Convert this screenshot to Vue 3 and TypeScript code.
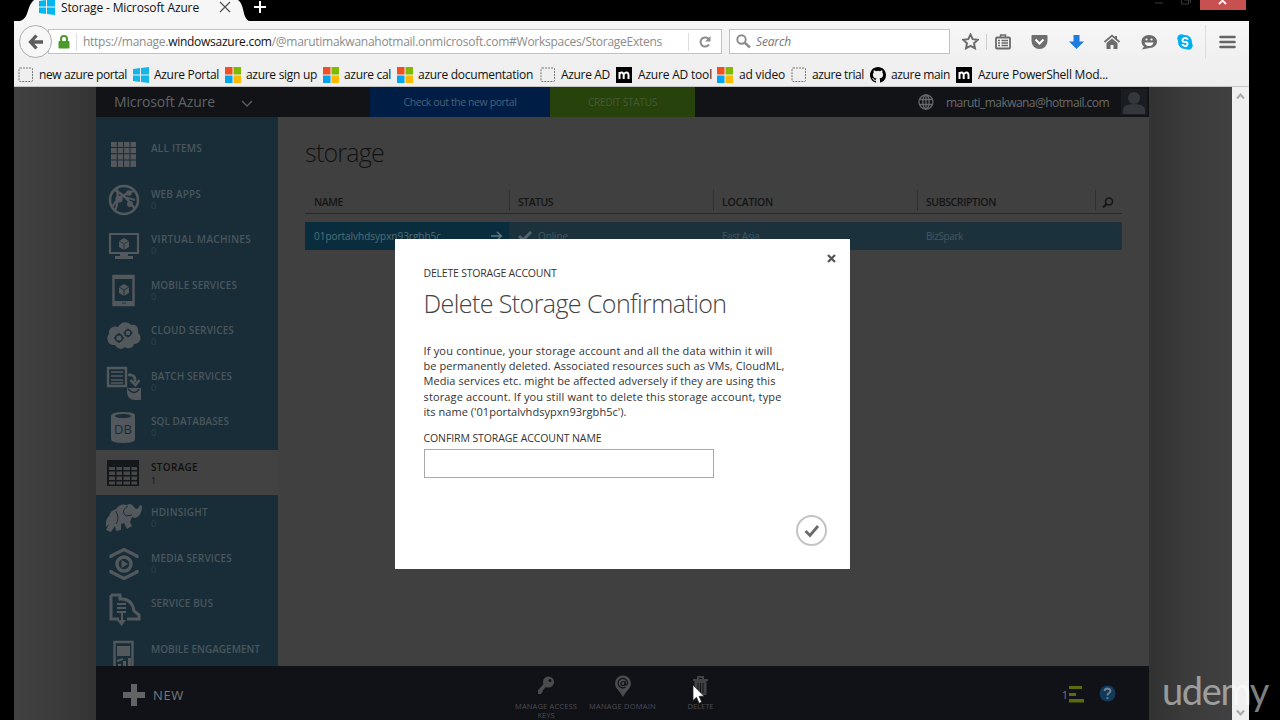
<script setup lang="ts">
import type { Directive } from 'vue'

interface Bookmark { label: string; kind: string; x: number; gap: number; w: number }
interface Service { label: string; count: string; icon: string; w: number; active?: boolean }

// Adjusts tracking so that a label occupies its designed measure.
const vFit: Directive<HTMLElement, number> = {
  mounted(el, { value }) {
    const n = (el.textContent ?? '').length
    const natural = el.getBoundingClientRect().width
    if (n > 1) el.style.letterSpacing = `${(value - natural) / n}px`
  },
}

const bookmarks: Bookmark[] = [
  { label: 'new azure portal', kind: 'blank', x: 115, gap: 5, w: 88 },
  { label: 'Azure Portal', kind: 'win', x: 92, gap: 5, w: 65 },
  { label: 'azure sign up', kind: 'ms', x: 98, gap: 5, w: 71 },
  { label: 'azure cal', kind: 'ms', x: 74, gap: 5, w: 47 },
  { label: 'azure documentation', kind: 'ms', x: 143, gap: 5, w: 115 },
  { label: 'Azure AD', kind: 'blank', x: 76, gap: 5, w: 49 },
  { label: 'Azure AD tool', kind: 'm', x: 101, gap: 6, w: 74 },
  { label: 'ad video', kind: 'ms', x: 74, gap: 6, w: 46 },
  { label: 'azure trial', kind: 'blank', x: 79, gap: 5, w: 52 },
  { label: 'azure main', kind: 'git', x: 86, gap: 5, w: 59 },
  { label: 'Azure PowerShell Mod...', kind: 'm', x: 160, gap: 6, w: 130 },
]

const gear = '<circle cx="0" cy="0" r="3.4" fill="none" stroke="#192c37" stroke-width="1.6"/><path d="M0-5v2M0 3v2M-5 0h2M3 0h2" stroke="#192c37" stroke-width="1.4"/>'

const icons: Record<string, string> = {
  all: '<path d="M5 6h25v25H5z" fill="currentColor"/><path d="M5 11.5h25M5 17.7h25M5 24h25M11.3 6v25M17.6 6v25M24 6v25" stroke="#192c37" stroke-width="1"/>',
  web: '<circle cx="18" cy="18" r="14" fill="none" stroke="currentColor" stroke-width="2.6"/><path d="M9 8Q20 14 29 27M6 25Q13 13 28 9M9 29Q13 20 11 6M18 15l11 3" fill="none" stroke="currentColor" stroke-width="2.2"/><circle cx="13" cy="17" r="3.6" fill="currentColor"/><circle cx="23" cy="11" r="2.8" fill="currentColor"/><circle cx="24" cy="22" r="3" fill="currentColor"/>',
  vm: '<path d="M4 7h28v19H4z" fill="none" stroke="currentColor" stroke-width="2.2"/><path d="M14 26h8v3h5v3H9v-3h5z" fill="currentColor"/><path d="M18 11l5 3v6l-5 3-5-3v-6z" fill="currentColor"/><path d="M13 14l5 3 5-3M18 17v6" fill="none" stroke="#192c37" stroke-width=".7"/>',
  mobile: '<path d="M7.5 3h20v29h-20z" fill="none" stroke="currentColor" stroke-width="2.4"/><path d="M7 2h21v4H7zM7 28h21v5H7z" fill="currentColor"/><path d="M18 11l5 3v6l-5 3-5-3v-6z" fill="currentColor"/><path d="M13 14l5 3 5-3M18 17v6M16 30h4" fill="none" stroke="#192c37" stroke-width=".9"/>',
  cloud: '<path d="M9 27C3 28-1 21 3 16c-1-6 5-9 9-7 3-6 10-6 13-2 6-1 8 3 7 8 5 4 2 11-4 11-1 5-7 5-9 3-3 3-8 2-10-2z" fill="currentColor"/><g transform="translate(13 20)">' + gear + '</g><g transform="translate(22 15) scale(.9)">' + gear + '</g>',
  batch: '<path d="M2 4h18v18H2z" fill="none" stroke="currentColor" stroke-width="2.4"/><path d="M5 8h12M5 12h12M5 16h12M5 19h12" stroke="currentColor" stroke-width="1.7"/><path d="M22 11q8-1 7 7M24.500 16l5 5 4-5" fill="none" stroke="currentColor" stroke-width="2.6"/><path d="M21 24h14v12h-6q-7 0-8-7z" fill="currentColor"/><path d="M22 25q7 7 11 0" fill="none" stroke="#192c37" stroke-width="1.3"/>',
  sql: '<path d="M5 7q0-4 12.500-4T29 7v23q0 4-12 4T5 30z" fill="currentColor"/><ellipse cx="17" cy="7" rx="8" ry="2" fill="#192c37"/><text x="17" y="25" text-anchor="middle" font-family="Open Sans, sans-serif" font-size="13" font-weight="400" fill="#192c37">DB</text>',
  storage: '<path d="M1 5h32v26H1z" fill="#14171b"/><path d="M3 12h6v3H3zm7.500 0H16v3h-5.500zm7 0H24v3h-6.500zm8 0H31v3h-5.500zM3 16.500h6v3.500H3zm7.500 0H16V20h-5.500zm7 0H24V20h-6.500zm8 0H31V20h-5.500zM3 21.500h6V25H3zm7.500 0H16V25h-5.500zm7 0H24V25h-6.500zm8 0H31V25h-5.500zM3 26.500h6v3H3zm7.500 0H16v3h-5.500zm7 0H24v3h-6.500zm8 0H31v3h-5.500z" fill="#484848"/>',
  elephant: '<path d="M10 9q4-6 11-4 4-3 7 2 3 5 6-2l2 1q0 10-7 12l-3-1-2 5 2 4-5 3-3-6-3 1v6l-5 1-1-5-4 6-5-2 3-6-3 3q-1-8 3-11 1-5 7-7z" fill="currentColor"/><path d="M10 11q4 8 0 13M22 6q-8 5-2 10l6-1" fill="none" stroke="#192c37" stroke-width="1"/>',
  media: '<path d="M5 12V10L18 3.500 31 10v2M5 24v2l13 6.500L31 26v-2" fill="none" stroke="currentColor" stroke-width="3.200"/><circle cx="18" cy="18" r="7" fill="none" stroke="currentColor" stroke-width="3.400"/><path d="M15.500 14v8l6.500-4z" fill="currentColor"/>',
  bus: '<path d="M5 4h9v4q12-1 14 12l5 4v4H21M13 28H5V4" fill="none" stroke="currentColor" stroke-width="3"/><path d="M11 13h9M11 17h9M11 21h9M16 21v9" stroke="currentColor" stroke-width="2"/><path d="M11 29h9l-4.500 6z" fill="currentColor"/>',
  engage: '<path d="M8.500 5h18v32h-18z" fill="none" stroke="currentColor" stroke-width="2.400"/><path d="M11 9h13v10H11zM12 27h3v6h-3zM17 24h3v9h-3zM22 21h3v12h-3z" fill="currentColor"/><path d="M11 24l6-2" stroke="currentColor" stroke-width="2"/>',
}

const services: Service[] = [
  { label: 'ALL ITEMS', count: '', icon: 'all', w: 51 },
  { label: 'WEB APPS', count: '0', icon: 'web', w: 50 },
  { label: 'VIRTUAL MACHINES', count: '0', icon: 'vm', w: 100 },
  { label: 'MOBILE SERVICES', count: '0', icon: 'mobile', w: 86 },
  { label: 'CLOUD SERVICES', count: '0', icon: 'cloud', w: 83 },
  { label: 'BATCH SERVICES', count: '0', icon: 'batch', w: 81 },
  { label: 'SQL DATABASES', count: '0', icon: 'sql', w: 78 },
  { label: 'STORAGE', count: '1', icon: 'storage', w: 47, active: true },
  { label: 'HDINSIGHT', count: '0', icon: 'elephant', w: 57 },
  { label: 'MEDIA SERVICES', count: '0', icon: 'media', w: 81 },
  { label: 'SERVICE BUS', count: '', icon: 'bus', w: 62 },
  { label: 'MOBILE ENGAGEMENT', count: '', icon: 'engage', w: 109 },
]

const warning = [
  { text: 'If you continue, your storage account and all the data within it will', w: 349 },
  { text: 'be permanently deleted. Associated resources such as VMs, CloudML,', w: 361 },
  { text: 'Media services etc. might be affected adversely if they are using this', w: 352 },
  { text: 'storage account. If you still want to delete this storage account, type', w: 358 },
  { text: "its name ('01portalvhdsypxn93rgbh5c').", w: 203 },
]
</script>

<template>
  <div class="screen">
    <div class="browser">
      <div class="tabstrip">
        <svg class="tabshape" width="236" height="22" viewBox="0 0 236 22"><path d="M0 22C15 20 9 8 18 0H222C230 6 225 20 236 22z" fill="#f6f6f6" /></svg>
        <svg class="tabicon" width="16" height="16" viewBox="0 0 16 16" fill="#00b7f0"><path d="M0 2l7-1v6.500H0zM8 1l8-1v7.500H8zM0 8.500h7V15l-7-1zM8 8.500h8V16l-8-1z" /></svg>
        <span class="tabtitle"><span v-fit="138" class="t">Storage - Microsoft Azure</span></span>
        <svg class="tabclose" width="12" height="12" viewBox="0 0 12 12" stroke="#555" stroke-width="1.300"><path d="M1 1l10 10M11 1L1 11" /></svg>
        <svg class="tabadd" width="14" height="14" viewBox="0 0 14 14" stroke="#fff" stroke-width="2"><path d="M7 1v12M1 7h12" /></svg>
        <div class="winctl">
          <svg width="42" height="10" viewBox="0 0 42 10" fill="none" stroke="#393939"><path d="M1 3h8M27.500 0v4h7V0M30 0h6.500v3" /></svg>
          <span class="winclose"><svg width="10" height="8" viewBox="0 0 10 8" stroke="#fff" stroke-width="1.800"><path d="M1-3l7 7M8-3L1 4" /></svg></span>
        </div>
      </div>

      <div class="toolbar">
        <div class="nav">
          <div class="back"><svg width="16" height="16" viewBox="0 0 16 16" fill="none" stroke="#5c5c5c" stroke-width="3.300"><path d="M15 8H3M8.500 1.500L2.500 8l6 6.500" /></svg></div>
          <div class="urlbar">
            <svg class="lock" width="12" height="14" viewBox="0 0 12 14"><path d="M3 7V4a3 3 0 016 0v3" fill="none" stroke="#4c9a2a" stroke-width="2" /><rect x=".5" y="6" width="11" height="7.500" rx="1" fill="#4c9a2a" /></svg>
            <span class="url"><span v-fit="579" class="t">https://manage.<b>windowsazure.com</b>/@marutimakwanahotmail.onmicrosoft.com#Workspaces/StorageExtens</span></span>
            <span class="reload"><svg width="14" height="14" viewBox="0 0 14 14"><path d="M11 9.500A4.600 4.600 0 1111 4.500" fill="none" stroke="#8b8b8b" stroke-width="2" /><path d="M12.500 1v5.500H7z" fill="#8b8b8b" /></svg></span>
          </div>
          <div class="search">
            <svg width="15" height="15" viewBox="0 0 15 15" fill="none" stroke="#8a8a8a"><circle cx="5.500" cy="5.500" r="4.200" stroke-width="1.900" /><path d="M8.500 8.500l5.500 5" stroke-width="2.400" /></svg>
            <i v-fit="35" class="t">Search</i>
          </div>
          <div class="tools">
            <svg width="17" height="17" viewBox="0 0 17 17"><path d="M8.500 1.500l2.200 4.700 5 .6-3.700 3.500 1 5-4.500-2.500L4 15.300l1-5L1.300 6.800l5-.6z" fill="none" stroke="#6a6a6a" stroke-width="1.900" /></svg>
            <span class="rule"></span>
            <div class="actions">
              <svg width="16" height="16" viewBox="0 0 16 16" fill="none" stroke="#6a6a6a" stroke-width="1.800"><rect x="1" y="3.500" width="14" height="11" rx="1" /><path d="M5.500 3V1h5v2M3 6.500h2M6.500 6.500H13M3 9h2M6.500 9H13M3 11.500h2M6.500 11.500H13" stroke-width="1.400" /></svg>
              <svg width="17" height="16" viewBox="0 0 17 16"><path d="M1.500 1h14q1 0 1 1v5a8 8 0 01-16 0V2q0-1 1-1z" fill="#6e6e6e" /><path d="M4.500 5.500l4 4 4-4" fill="none" stroke="#fff" stroke-width="2" /></svg>
              <svg width="15" height="16" viewBox="0 0 15 16"><path d="M4.500 1h6v6.500H15L7.500 15 0 7.500h4.500z" fill="#1c7ce0" /></svg>
              <svg width="16" height="16" viewBox="0 0 16 16"><path d="M.5 8L8 1.500 15.500 8" fill="none" stroke="#6b6b6b" stroke-width="1.700" /><path d="M2.500 9L8 4.500 13.500 9v6h-4v-4h-3v4h-4zM11 2h2v3h-2z" fill="#6b6b6b" /></svg>
              <svg width="16" height="16" viewBox="0 0 16 16"><path d="M8 1c5 0 8 3 8 6.500S13 14 8.500 14L1 15.500l2-3C-2 8 1 1 8 1z" fill="#6b6b6b" /><circle cx="5.500" cy="5.500" r="1.100" fill="#fff" /><circle cx="10.500" cy="5.500" r="1.100" fill="#fff" /><path d="M3.500 8.500h9q-1 3.500-4.500 3.500T3.500 8.500z" fill="#fff" /></svg>
              <svg width="16" height="16" viewBox="0 0 16 16" fill="#00aff0"><circle cx="8" cy="8" r="7" /><circle cx="4.500" cy="4.500" r="4.200" /><circle cx="11.500" cy="11.500" r="4.200" /><path d="M11 5.500Q10 4 8 4T5.500 6 8 8t2.500 2.200T8 12t-3-1.700" fill="none" stroke="#fff" stroke-width="1.800" /></svg>
            </div>
            <span class="rule tall"></span>
            <svg class="menu" width="17" height="14" viewBox="0 0 17 14" stroke="#666" stroke-width="2.600"><path d="M1.500 2h14M1.500 7h14M1.500 12h14" stroke-linecap="round" /></svg>
          </div>
        </div>
        <div class="bookmarks">
          <div v-for="b in bookmarks" :key="b.label" class="bm" :style="{ width: b.x + 'px', gap: b.gap + 'px' }">
            <svg v-if="b.kind === 'blank'" width="16" height="16" viewBox="0 0 16 16"><rect x="1" y="1" width="13.500" height="13.500" rx="1" fill="none" stroke="#777" stroke-dasharray="2 1" /></svg>
            <svg v-else-if="b.kind === 'win'" width="16" height="16" viewBox="0 0 16 16" fill="#16b5e8"><path d="M0 2l7-1v6.500H0zM8 1l8-1v7.500H8zM0 8.500h7V15l-7-1zM8 8.500h8V16l-8-1z" /></svg>
            <svg v-else-if="b.kind === 'ms'" width="16" height="16" viewBox="0 0 16 16"><path d="M0 0h7.500v7.500H0z" fill="#f25022" /><path d="M8.500 0H16v7.500H8.500z" fill="#7fba00" /><path d="M0 8.500h7.500V16H0z" fill="#00a4ef" /><path d="M8.500 8.500H16V16H8.500z" fill="#ffb900" /></svg>
            <svg v-else-if="b.kind === 'm'" width="16" height="16" viewBox="0 0 16 16"><path d="M0 0h16v16H0z" /><path d="M3.500 12V5M3.500 7q1-2 2.500-1.500T7.700 8v4M8 7q1.500-2 3-1.500T12.500 8v4" fill="none" stroke="#fff" stroke-width="2" /></svg>
            <svg v-else width="16" height="16" viewBox="0 0 16 16"><path d="M8 0C3.580 0 0 3.580 0 8c0 3.540 2.290 6.530 5.470 7.590.4.070.55-.17.55-.38 0-.19-.01-.82-.01-1.490-2.010.37-2.530-.49-2.690-.94-.09-.23-.48-.94-.82-1.130-.28-.15-.68-.52-.01-.53.63-.01 1.080.58 1.230.82.72 1.210 1.870.87 2.330.66.07-.52.28-.87.51-1.070-1.780-.2-3.640-.89-3.640-3.950 0-.87.31-1.590.82-2.150-.08-.2-.36-1.020.08-2.120 0 0 .67-.21 2.200.82a7.600 7.600 0 014 0c1.530-1.040 2.200-.82 2.200-.82.44 1.100.16 1.920.08 2.120.51.56.82 1.270.82 2.150 0 3.070-1.870 3.750-3.650 3.950.29.25.54.73.54 1.480 0 1.070-.01 1.930-.01 2.200 0 .21.15.46.55.38A8 8 0 0016 8c0-4.420-3.580-8-8-8z" /></svg>
            <span v-fit="b.w" class="t">{{ b.label }}</span>
          </div>
        </div>
      </div>

      <div class="viewport">
        <div class="gutter left"></div>
        <div class="portal">
          <header class="top">
            <div class="brand"><span v-fit="101" class="t">Microsoft Azure</span><svg width="12" height="8" viewBox="0 0 12 8" fill="none" stroke="#5c5f62" stroke-width="1.300"><path d="M1 1l5 5 5-5" /></svg></div>
            <div class="promo"><span v-fit="113" class="t">Check out the new portal</span></div>
            <div class="credit"><span v-fit="69" class="t">CREDIT STATUS</span></div>
            <div class="user">
              <svg width="16" height="16" viewBox="0 0 16 16" fill="none" stroke="#65686a" stroke-width="1.300"><circle cx="8" cy="8" r="7" /><ellipse cx="8" cy="8" rx="3.200" ry="7" /><path d="M8 1v14M1.500 5.500h13M1.500 10.500h13" /></svg>
              <span v-fit="163" class="t">maruti_makwana@hotmail.com</span>
              <svg class="avatar" width="26" height="26" viewBox="0 0 26 26"><path d="M0 0h26v26H0z" fill="#191d22" /><circle cx="13" cy="9" r="6" fill="#34373b" /><path d="M2 25v-4q0-6 11-6t11 6v4z" fill="#34373b" /></svg>
            </div>
          </header>
          <div class="body">
            <nav class="side">
              <div v-for="s in services" :key="s.label" class="item" :class="{ active: s.active }">
                <svg width="36" height="38" viewBox="0 0 36 38"><g v-html="icons[s.icon]"></g></svg>
                <div class="txt"><span v-fit="s.w" class="t">{{ s.label }}</span><small>{{ s.count }}</small></div>
              </div>
            </nav>
            <main class="main">
              <h1><span v-fit="79" class="t">storage</span></h1>
              <div class="thead">
                <div><span v-fit="29" class="t">NAME</span></div>
                <div><span v-fit="35" class="t">STATUS</span></div>
                <div><span v-fit="51" class="t">LOCATION</span></div>
                <div><span v-fit="70" class="t">SUBSCRIPTION</span></div>
                <div class="find"><svg width="12" height="12" viewBox="0 0 12 12" fill="none" stroke="#151515" stroke-width="1.600"><circle cx="7" cy="4.500" r="3.500" /><path d="M4.500 7L1 10.500" stroke-width="2" /></svg></div>
              </div>
              <div class="row">
                <div class="name"><span v-fit="127" class="t">01portalvhdsypxn93rgbh5c</span><svg width="12" height="10" viewBox="0 0 12 10" fill="none" stroke="#657780" stroke-width="1.400"><path d="M0 5h10M6 1l4.500 4L6 9" /></svg></div>
                <div class="status"><svg width="14" height="11" viewBox="0 0 14 11" fill="none" stroke="#55646b" stroke-width="3"><path d="M1 5l4 4 8-8" /></svg><span v-fit="30" class="t">Online</span></div>
                <div><span v-fit="37" class="t">East Asia</span></div>
                <div><span v-fit="37" class="t">BizSpark</span></div>
              </div>
            </main>
          </div>
          <footer class="bar">
            <div class="new"><svg width="24" height="24" viewBox="0 0 24 24" fill="#626365"><path d="M9 1h6v8h8v6h-8v8H9v-8H1V9h8z" /></svg><span v-fit="31" class="t">NEW</span></div>
            <div class="cmd keys">
              <svg width="22" height="22" viewBox="0 0 22 22"><circle cx="13.500" cy="7" r="5.500" fill="#4b4c4e" /><path d="M11 9l-7 8" fill="none" stroke="#4b4c4e" stroke-width="3.500" /><path d="M3 15v4h3l2-3z" fill="#4b4c4e" /><circle cx="15" cy="5.500" r="1.500" fill="#111317" /></svg>
              <span v-fit="62" class="t">MANAGE ACCESS</span><span v-fit="17" class="t">KEYS</span>
            </div>
            <div class="cmd domain">
              <svg width="22" height="22" viewBox="0 0 22 22"><path d="M11 22C8 16 3 13 3 8.500a8 8 0 0116 0C19 13 14 16 11 22z" fill="#4b4c4e" /><g fill="none" stroke="#111317" stroke-width="1.200"><circle cx="11" cy="8.500" r="2" /><path d="M13 6v3.500q2.500 1.500 2.500-1.500a4.700 4.700 0 10-2 4" /></g></svg>
              <span v-fit="67" class="t">MANAGE DOMAIN</span>
            </div>
            <div class="cmd trash">
              <svg width="22" height="22" viewBox="0 0 22 22"><path d="M3 5h15M8 4V2h5v2" fill="none" stroke="#414244" stroke-width="2" /><path d="M4.500 6h12v14h-12z" fill="#414244" /><path d="M8 8v10M10.500 8v10M13 8v10" stroke="#111317" stroke-width="1" /></svg>
              <span v-fit="26" class="t">DELETE</span>
            </div>
            <div class="tail">
              <span class="one">1</span>
              <svg width="17" height="17" viewBox="0 0 17 17" fill="#5a6b10"><path d="M1 0h13v3H1zM1 7h7v3H1zM1 13h15v3.500H1z" /></svg>
              <svg class="help" width="17" height="17" viewBox="0 0 17 17"><circle cx="8.500" cy="8.500" r="8" fill="#123a5a" /><path d="M5.500 6q.5-2.500 3-2.500t3 2.300q0 1.500-1.700 2.300-1.300.7-1.300 2.300M8.500 12.200V14" fill="none" stroke="#758490" stroke-width="1.800" /></svg>
            </div>
          </footer>
        </div>
        <div class="gutter right"></div>
        <div class="scroll">
          <svg width="9" height="7" viewBox="0 0 9 7" fill="none" stroke="#aaa" stroke-width="2"><path d="M1 5.500l3.500-4 3.500 4" /></svg>
          <svg width="9" height="7" viewBox="0 0 9 7" fill="none" stroke="#aaa" stroke-width="2"><path d="M1 1.500l3.500 4 3.500-4" /></svg>
        </div>
      </div>
    </div>

    <div class="modal">
      <svg class="x" width="9" height="9" viewBox="0 0 9 9" stroke="#555" stroke-width="2.200"><path d="M1 1l7 7M8 1L1 8" /></svg>
      <div class="eyebrow"><span v-fit="133" class="t">DELETE STORAGE ACCOUNT</span></div>
      <h2><span v-fit="303" class="t">Delete Storage Confirmation</span></h2>
      <p><span v-for="l in warning" :key="l.text" class="line"><span v-fit="l.w" class="t">{{ l.text }}</span></span></p>
      <label><span v-fit="178" class="t">CONFIRM STORAGE ACCOUNT NAME</span></label>
      <div class="field"></div>
      <div class="ok"><svg width="16" height="14" viewBox="0 0 16 14" fill="none" stroke="#6a6a6a" stroke-width="2.800"><path d="M1.500 7l4.500 4.500L14 2" /></svg></div>
    </div>

    <svg class="cursor" width="13" height="21" viewBox="0 0 13 21"><path d="M1 1v15.500l3.500-3.200 2.600 6 2.600-1.200-2.600-5.800H12z" fill="#fff" stroke="#222" stroke-width=".7" /></svg>
    <div class="watermark"><span v-fit="106" class="t">udemy</span></div>
  </div>
</template>

<style>
html, body { background: #000; overflow: hidden; }
</style>

<style scoped>
* { box-sizing: border-box; }
svg { display: block; flex: none; }
.t { display: inline-block; white-space: nowrap; }
.screen { position: relative; width: 1280px; height: 720px; overflow: hidden; background: #000; font-family: "Open Sans", "Noto Sans", sans-serif; font-size: 12px; line-height: 16px; }
.browser { width: 1235px; height: 720px; margin-left: 14px; display: flex; flex-direction: column; }
.tabstrip { position: relative; height: 21px; display: flex; align-items: flex-start; flex: none; }
.tabshape { position: absolute; left: 2px; top: 0; }
.tabicon { position: relative; margin: -1px 6px 0 25px; }
.tabtitle { position: relative; width: 158px; color: #111; }
.tabclose { position: relative; margin-top: 1px; }
.tabadd { margin: 0 0 0 22px; }
.winctl { margin-left: auto; display: flex; gap: 4px; padding-right: 3px; }
.winclose { width: 46px; height: 10px; background: #c75050; display: flex; justify-content: center; }
.toolbar { height: 66px; flex: none; background: linear-gradient(#f7f7f7, #f0f0f0 60%, #eeeeee); border-bottom: 1px solid #c6c6c6; }
.nav { height: 41px; display: flex; align-items: center; padding-left: 5px; }
.back { width: 33px; height: 33px; border-radius: 50%; border: 1px solid #adadad; background: #f7f7f7; display: flex; align-items: center; justify-content: center; position: relative; z-index: 1; }
.urlbar { width: 674px; height: 25px; margin-left: -4px; border: 1px solid #bfc3c7; background: #fff; display: flex; align-items: center; }
.lock { margin-left: 9px; }
.url { width: 613px; height: 18px; margin-left: 6px; padding: 1px 0 0 6px; border-left: 1px solid #ddd; border-right: 1px solid #ddd; color: #8b8b8b; display: flex; align-items: center; }
.url b { font-weight: 400; color: #111; }
.reload { flex: 1; display: flex; justify-content: center; }
.search { width: 221px; height: 25px; margin-left: 7px; border: 1px solid #bfc3c7; background: #fff; padding-left: 6px; display: flex; align-items: center; gap: 5px; color: #777; }
.search .t { padding-top: 1px; }
.tools { flex: 1; display: flex; align-items: center; padding-left: 12px; }
.rule { width: 1px; height: 16px; margin-left: 7px; background: #ccc; }
.rule.tall { height: 34px; margin-left: 12px; background: #dfdfdf; }
.actions { width: 198px; margin-left: 8px; display: flex; align-items: center; justify-content: space-between; }
.menu { margin-left: 13px; }
.bookmarks { height: 25px; display: flex; align-items: center; padding-left: 4px; color: #111; }
.bookmarks .t { padding-top: 1px; }
.bm { flex: none; display: flex; align-items: center; }
.viewport { flex: 1; min-height: 0; display: flex; }
.gutter.left { width: 82px; background: linear-gradient(90deg, #414141, #3b3b3b 60%, #333); }
.gutter.right { width: 83px; background: linear-gradient(90deg, #323232, #3a3a3a 40%, #414141); }
.scroll { width: 17px; background: #f0f0f0; display: flex; flex-direction: column; justify-content: space-between; align-items: center; padding: 6px 0 4px; }
.portal { width: 1053px; display: flex; flex-direction: column; background: #404040; }
.top { height: 30px; flex: none; background: #111317; display: flex; color: #606366; }
.brand { width: 274px; padding-left: 18px; font-size: 14px; display: flex; align-items: center; gap: 26px; }
.brand svg { margin-top: 4px; }
.promo { width: 180px; background: #001e45; color: #4b5f78; font-size: 10.500px; display: flex; align-items: center; justify-content: center; }
.credit { width: 145px; background: #28420c; color: #475b35; font-size: 10px; display: flex; align-items: center; justify-content: center; }
.user { margin-left: auto; display: flex; align-items: center; gap: 12px; color: #696c6e; }
.user .t { padding-top: 1px; }
.avatar { margin-right: 2px; }
.body { flex: 1; min-height: 0; display: flex; }
.side { width: 182px; background: #192d38; padding-top: 14px; overflow: hidden; font-size: 10px; font-weight: 600; color: #4a565d; }
.item { height: 45.500px; padding: 4px 0 0 10px; display: flex; gap: 9px; }
.item svg { color: #53585c; margin-top: 1px; }
.item .txt { display: flex; flex-direction: column; align-items: flex-start; line-height: 14px; padding-top: 6px; }
.item small { font-size: 9px; line-height: 11px; font-weight: 400; margin-top: -1px; opacity: .45; }
.item.active { background: #424242; color: #101010; }
.item.active small { opacity: 1; margin-top: 1px; }
.main { flex: 1; padding: 17px 27px 0 27px; color: #151515; }
h1 { margin: 0; height: 56px; font-size: 25px; line-height: 36px; font-weight: 300; color: #121212; }
.thead { height: 24px; border-bottom: 1px solid #292929; display: grid; grid-template-columns: 204px 204px 204px 178px 27px; font-size: 10.500px; font-weight: 600; }
.thead > div { padding: 2px 0 0 9px; display: flex; align-items: center; height: 21px; }
.thead > div + div { border-left: 1px solid #303030; padding-left: 8px; }
.thead > div.find { padding-left: 6px; padding-top: 4px; }
.row { margin-top: 8px; height: 28px; background: #1b323d; display: grid; grid-template-columns: 204px 204px 204px 205px; font-size: 10px; color: #46575f; }
.row > div { padding-left: 9px; display: flex; align-items: center; }
.row .name { background: #0a2d3d; justify-content: space-between; padding-right: 6px; color: #536d78; }
.row .status { gap: 6px; }
.bar { height: 54px; flex: none; background: #111217; display: flex; color: #4c4d50; }
.new { width: 418px; padding: 3px 0 0 26px; display: flex; align-items: center; gap: 7px; font-size: 13px; color: #77787a; }
.cmd { display: flex; flex-direction: column; align-items: center; padding-top: 9px; font-size: 7.500px; line-height: 8px; }
.cmd .t:first-of-type { margin-top: 5px; }
.keys .t + .t { margin-top: 1px; }
.keys { width: 64px; }
.domain { width: 89px; }
.trash { width: 67px; }
.tail { margin-left: auto; display: flex; align-items: center; padding-right: 33px; padding-top: 3px; color: #777; }
.one { font-size: 11px; }
.help { margin-left: 14px; margin-top: -2px; }
.modal { position: absolute; left: 395px; top: 239px; width: 455px; height: 330px; background: #fff; padding: 26px 28px 0 28.500px; color: #333; }
.modal .x { position: absolute; right: 14px; top: 15px; }
.eyebrow { font-size: 10.500px; }
h2 { margin: 4px 0 0; font-size: 25px; line-height: 36px; font-weight: 300; color: #444; }
p { margin: 22px 0 0; font-size: 11px; line-height: 15.200px; color: #333; }
.line { display: block; height: 15.200px; }
label { display: block; margin-top: 11px; font-size: 10.500px; line-height: 16px; }
.field { width: 290px; height: 29px; margin-top: 3px; border: 1px solid #a9a9a9; }
.ok { position: absolute; right: 23px; bottom: 23px; width: 31px; height: 31px; border: 2px solid #c4c4c4; border-radius: 50%; display: flex; align-items: center; justify-content: center; }
.cursor { position: absolute; left: 692px; top: 684px; }
.watermark { position: absolute; left: 1162px; top: 667px; font-family: Lato, sans-serif; font-size: 38px; line-height: 46px; color: rgba(255, 255, 255, .5); }
</style>
